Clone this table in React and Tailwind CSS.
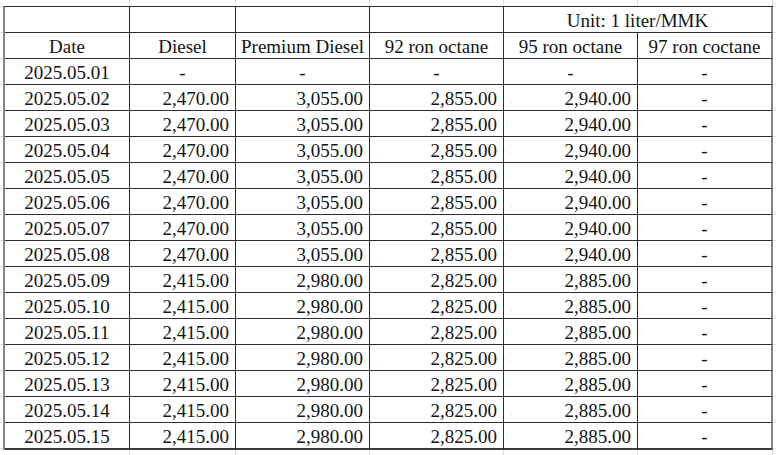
import React from "react";

const W = ["w-[125px]", "w-[106px]", "w-[134px]", "w-[134px]", "w-[134px]", "w-[135px]"];

const A = ["2,470.00", "3,055.00", "2,855.00", "2,940.00"];
const B = ["2,415.00", "2,980.00", "2,825.00", "2,885.00"];

const rows = [
  ["2025.05.01", null],
  ["2025.05.02", A],
  ["2025.05.03", A],
  ["2025.05.04", A],
  ["2025.05.05", A],
  ["2025.05.06", A],
  ["2025.05.07", A],
  ["2025.05.08", A],
  ["2025.05.09", B],
  ["2025.05.10", B],
  ["2025.05.11", B],
  ["2025.05.12", B],
  ["2025.05.13", B],
  ["2025.05.14", B],
  ["2025.05.15", B],
];

const headers = ["Date", "Diesel", "Premium Diesel", "92 ron octane", "95 ron octane", "97 ron coctane"];

function Cell({ i, align = "center", last = false, bottom = false, children }) {
  const base = "h-[26px] shrink-0 border-r border-b border-[#2e2e2e] pt-[4px] leading-[19px] whitespace-nowrap";
  const al = align === "right" ? "text-right pr-[6px]" : "text-center";
  const edge = i === 5 ? "border-r-2 border-r-[#858585]" : "";
  const bot = last ? "h-[27px] border-b-2 border-b-[#3a3a3a]" : "";
  return <div className={`${base} ${W[i]} ${al} ${edge} ${bot}`}>{children}</div>;
}

function FaintStrip({ h }) {
  return (
    <div className={`flex ${h}`}>
      <div className="w-[5px] shrink-0" />
      {W.map((w, i) => (
        <div key={i} className={`${w} shrink-0 border-r border-[#dcdcdc]`} />
      ))}
    </div>
  );
}

export default function App() {
  return (
    <div
      className="w-[776px] h-[455px] bg-white text-[#141414] text-[19px] overflow-hidden"
      style={{ fontFamily: '"Liberation Serif", "Times New Roman", serif' }}
    >
      <FaintStrip h="h-[6px]" />
      <div className="flex">
        <div className="w-[3px] shrink-0 border-t border-[#dcdcdc]">
          {Array.from({ length: 17 }).map((_, i) => (
            <div key={i} className="h-[26px] border-b border-[#dcdcdc]" />
          ))}
        </div>
        <div className="border-l-2 border-l-[#858585] border-t border-t-[#2e2e2e]">
          {/* header row 1 */}
          <div className="flex">
            <Cell i={0} />
            <Cell i={1} />
            <Cell i={2} />
            <Cell i={3} />
            <div className="h-[26px] w-[269px] shrink-0 border-b border-b-[#2e2e2e] border-r-2 border-r-[#858585] pt-[4px] leading-[19px] text-center whitespace-nowrap">
              Unit: 1 liter/MMK
            </div>
          </div>
          {/* header row 2 */}
          <div className="flex">
            {headers.map((h, i) => (
              <Cell key={i} i={i}>
                {h}
              </Cell>
            ))}
          </div>
          {rows.map(([d, v], r) => {
            const last = r === rows.length - 1;
            return (
              <div key={d} className="flex">
                <Cell i={0} last={last}>{d}</Cell>
                {[0, 1, 2, 3].map((k) => (
                  <Cell key={k} i={k + 1} last={last} align={v ? "right" : "center"}>
                    {v ? v[k] : "-"}
                  </Cell>
                ))}
                <Cell i={5} last={last}>-</Cell>
              </div>
            );
          })}
        </div>
        <div className="w-[3px] shrink-0 border-t border-[#dcdcdc]">
          {Array.from({ length: 17 }).map((_, i) => (
            <div key={i} className="h-[26px] border-b border-[#dcdcdc]" />
          ))}
        </div>
      </div>
      <FaintStrip h="h-[8px]" />
    </div>
  );
}
